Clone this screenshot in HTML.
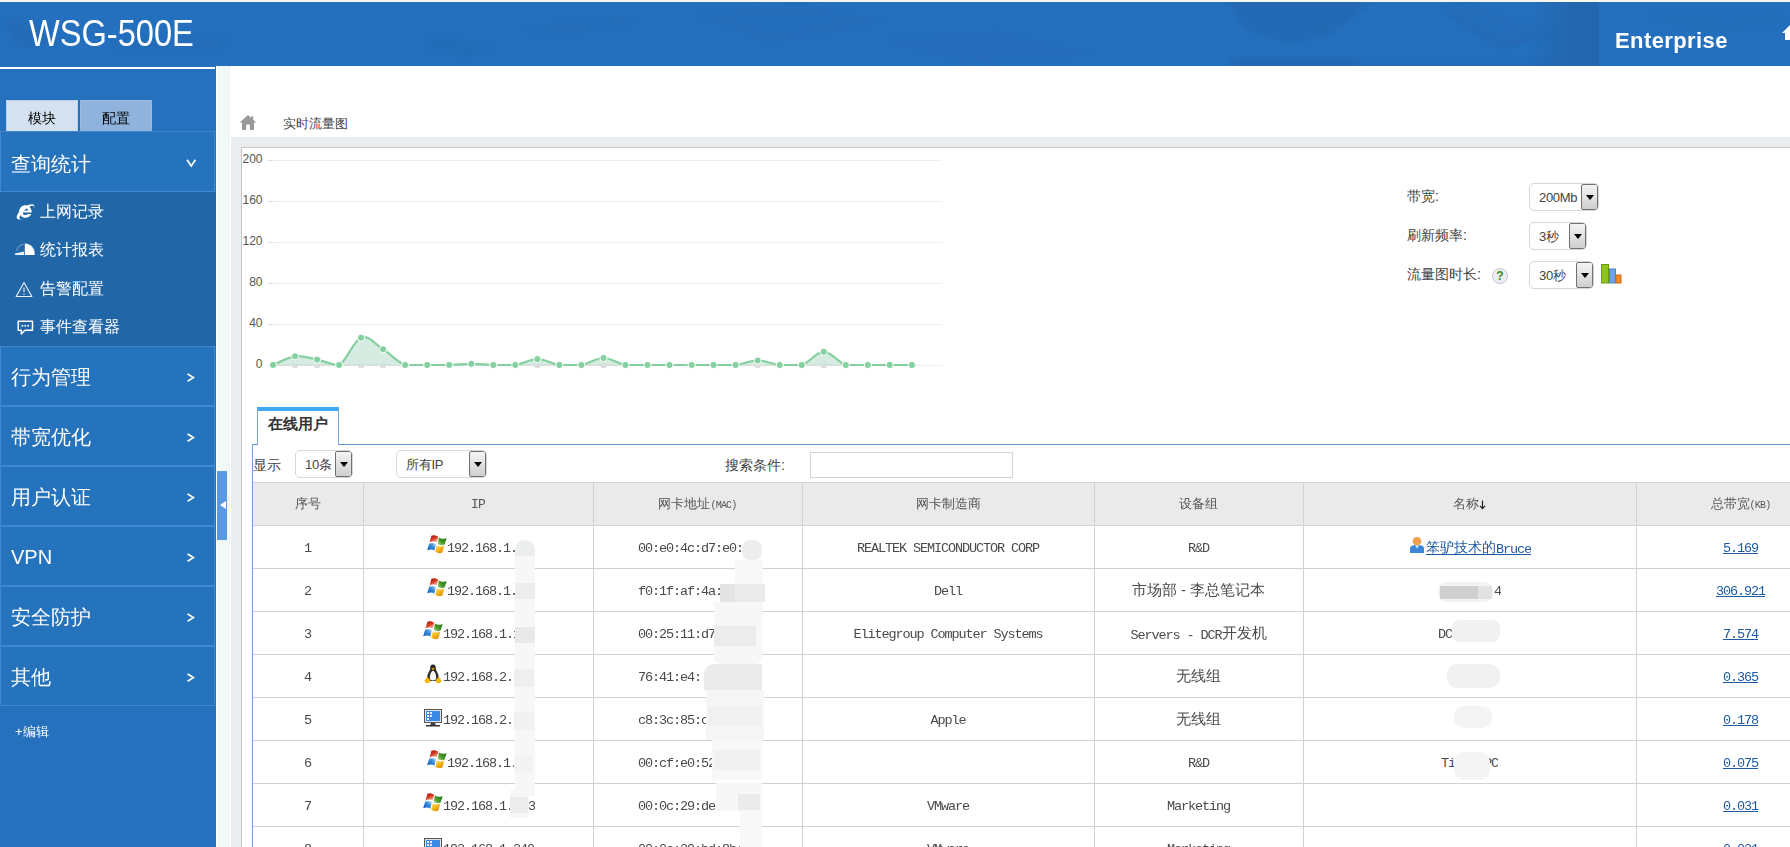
<!DOCTYPE html>
<html lang="zh">
<head>
<meta charset="utf-8">
<title>WSG-500E</title>
<style>
*{box-sizing:border-box;margin:0;padding:0}
html,body{width:1790px;height:847px;overflow:hidden;background:#fff}
body{position:relative;font-family:"Liberation Sans",sans-serif;font-size:13px;color:#444}
.abs{position:absolute}
/* ---------- header ---------- */
#hdr{position:absolute;left:0;top:0;width:1790px;height:66px;background:#2570be;overflow:hidden;border-top:2px solid #fbf8f4}
#hdr svg{position:absolute;left:0;top:-2px}
#logo{position:absolute;left:29px;top:11px;height:42px;line-height:42px;font-size:36.5px;color:#fff;white-space:nowrap;transform:scaleX(.893);transform-origin:0 0}
#ent{position:absolute;left:1599px;top:-2px;width:191px;height:66px}
#ent b{position:absolute;left:16px;top:27px;height:28px;line-height:28px;font-size:22px;letter-spacing:.4px;color:#fff;white-space:nowrap}
/* ---------- sidebar ---------- */
#side{position:absolute;left:0;top:66px;width:216px;height:781px;background:#2571bd}
#side .wl{position:absolute;left:0;top:1px;width:215px;height:2px;background:#fff}
.tab{position:absolute;top:34px;height:31px;line-height:34px;text-align:center;font-size:14px;color:#000;border:1px solid #b9cfe8;border-bottom:none;white-space:nowrap;overflow:hidden}
.mi{position:absolute;left:0;width:215px;height:60px;background:#2673bd;border:1px solid #4087d0;color:#fff;font-size:20px;line-height:61px;padding-left:10px;white-space:nowrap;overflow:hidden}
.mi .cv{position:absolute;left:185px;top:26px;fill:none;stroke:#fff;stroke-width:1.700}
#sub{position:absolute;left:0;top:126px;width:216px;height:154px;background:#2167a7}
.si{position:absolute;left:40px;height:22px;line-height:22px;font-size:16px;color:#fff;white-space:nowrap}
#sub svg{position:absolute}
/* ---------- splitter ---------- */
#split{position:absolute;left:216px;top:66px;width:15px;height:781px;background:#f0f9f6;border-left:1px solid #fffffb;border-right:1px solid #fff}
#split:after{content:"";position:absolute;right:0;top:0;width:1px;height:100%;background:#f0f2f4}
#grip{position:absolute;left:217px;top:471px;width:10px;height:69px;background:#5b99e0}
#grip:after{content:"";position:absolute;left:3px;top:30px;border:4.500px solid transparent;border-right:6px solid #fff;border-left:0}
/* ---------- content ---------- */
.lb{position:absolute;height:22px;line-height:22px;font-size:14px;color:#444;white-space:nowrap}
.sel{position:absolute;height:28px;border:1px solid #d6d6d6;border-radius:5px;background:#fff;overflow:hidden}
.sel span{position:absolute;left:9px;top:0;height:27px;line-height:28px;font-size:13px;color:#444;white-space:nowrap;font-family:"Liberation Sans",sans-serif;letter-spacing:-.3px}
.sel i{position:absolute;right:0;top:0;width:17px;height:26px;border:1px solid #707070;border-radius:2px;background:linear-gradient(#f4f4f4,#cfcfcf)}
.sel i:after{content:"";position:absolute;left:4px;top:10px;border:4px solid transparent;border-top:5px solid #000;border-bottom:0}
#thead{position:absolute;left:253px;top:483px;width:1537px;height:42px;background:#eaeaea}
.th{position:absolute;top:483px;height:42px;line-height:42px;text-align:center;font-size:13px;color:#555;white-space:nowrap;overflow:hidden}
.th b{font-weight:normal;font-family:"Liberation Mono",monospace;font-size:13px;letter-spacing:-.8px}
.th small{font-size:10px;font-family:"Liberation Mono",monospace;letter-spacing:-.8px}
.hl{position:absolute;left:253px;width:1537px;height:1px;background:#d2d2d2}
.vl{position:absolute;top:483px;width:1px;height:364px;background:#d2d2d2}
.td,.tx{position:absolute;height:42px;line-height:43px;font-family:"Liberation Mono",monospace;font-size:13.500px;letter-spacing:-1.100px;color:#4a4a4a;white-space:nowrap;overflow:hidden}
.td{text-align:center}
.cj{font-size:14.500px;letter-spacing:0;font-family:"Liberation Sans",sans-serif;position:relative;top:-1px}
.lk,.lk u{color:#1f5ba3;text-decoration:underline}
.ic{position:absolute}
.bl{position:absolute}
</style>
</head>
<body>
<!-- ================= HEADER ================= -->
<div id="hdr">
<svg width="1790" height="68" viewBox="0 0 1790 68">
 <defs><filter id="bl" x="-5%" y="-30%" width="110%" height="160%"><feGaussianBlur stdDeviation="2.5"/></filter></defs>
 <g fill="#2266af" filter="url(#bl)">
  <path d="M6 18L40 26 62 40 30 48 10 40Z" opacity=".45"/>
  <path d="M110 40L230 36 225 50 120 54Z" opacity=".3"/>
  <path d="M424 36L500 44 470 58 430 52Z" opacity=".35"/>
  <path d="M520 28L620 16 640 24 540 38Z" opacity=".3"/>
  <path d="M690 14L800 4 890 22 770 44Z" opacity=".22"/>
  <path d="M880 40L1000 30 1100 56 960 62Z" opacity=".2"/>
  <path d="M1228 2H1372L1330 36 1290 44 1245 30Z" opacity=".7"/>
  <path d="M1230 57H1360V68H1230Z" opacity=".6"/>
  <path d="M1360 58H1560V68H1360Z" opacity=".3"/>
  <path d="M1440 6L1470 4 1560 36 1500 50 1480 40Z" opacity=".22"/>
 </g>
 <path d="M1440 9L1500 44 1560 34" fill="none" stroke="#2163aa" stroke-width="2" opacity=".35" filter="url(#bl)"/>
 <linearGradient id="hg" x1="0" x2="1" y1="0" y2="0"><stop offset="0" stop-color="#2365ac" stop-opacity="0"/><stop offset=".55" stop-color="#2365ac" stop-opacity=".8"/><stop offset="1" stop-color="#2365ac" stop-opacity=".9"/></linearGradient><rect x="1530" y="2" width="69" height="66" fill="url(#hg)"/>
 <path d="M1640 14L1780 10 1790 24 1700 36Z" fill="#2266af" opacity=".25" filter="url(#bl)"/>
</svg>
<div id="logo">WSG-500E</div>
<div id="ent"><b>Enterprise</b>
 <svg style="left:183px;top:24px" width="10" height="16" viewBox="0 0 10 16"><path d="M0 9 L8 1 L10 1 L10 16 L3 16 L3 9 Z" fill="#fff"/></svg>
</div>
</div>

<!-- ================= SIDEBAR ================= -->
<div id="side">
 <div class="wl"></div>
 <div class="tab" style="left:6px;width:72px;background:#d3e1f0">模块</div>
 <div class="tab" style="left:80px;width:72px;background:#8fb3dc;border-color:#9bbbe0">配置</div>
 <div class="mi" style="top:65px;height:61px;line-height:65px">查询统计<svg class="cv" width="10" height="10" viewBox="0 0 10 10"><path d="M1 1.800L5.200 8 9.400 1.800"/></svg></div>
 <div id="sub">
  <!-- IE -->
  <svg style="left:16px;top:11px" width="19" height="17" viewBox="0 0 19 17"><path d="M9.5 2.2c-3.6 0-6.3 2.6-6.3 6.3 0 3.600 2.7 6.300 6.300 6.300 2.700 0 4.900-1.500 5.800-3.800h-3.500c-.5.700-1.300 1.100-2.300 1.100-1.600 0-2.700-1-2.900-2.600h9.100c.1-3.900-2.500-7.300-6.200-7.300zm-2.800 5.200c.3-1.400 1.300-2.400 2.800-2.400 1.500 0 2.500 1 2.700 2.400z" fill="#fff"/><path d="M1.200 15.800c-1.500-1.500.2-5 3.200-8.200 3.400-3.600 9.800-7.400 12.800-6 1.500.7 1.200 2.600.6 3.800.3-1.300.2-2.300-.8-2.600-2-.6-6.600 2.200-9.800 5.600-2.800 3-4.400 6.200-3.600 7.200.7.900 2.800.1 4.800-1.200-2.600 2.200-5.800 2.800-7.200 1.400z" fill="#fff"/></svg>
  <!-- pie -->
  <svg style="left:15px;top:51px" width="20" height="13" viewBox="0 0 20 13"><path d="M9.800 12V.6A9.600 9.600 0 0 1 19.500 12z" fill="#fff"/><path d="M9 12H0v-1.600l9-1.900z" fill="#fff" opacity=".9"/><path d="M1.500 7.500A9 9 0 0 1 8.600 1.200" fill="none" stroke="#7aa6d6" stroke-width="1"/></svg>
  <!-- warn -->
  <svg style="left:15px;top:89px" width="18" height="17" viewBox="0 0 18 17"><path d="M9 1.500L1.200 15.500H16.800Z" fill="none" stroke="#fff" stroke-width="1.100" stroke-linejoin="round" opacity=".92"/><path d="M9 6.500v4.800M9 12.800v1.200" stroke="#fff" stroke-width="1.100" opacity=".92"/></svg>
  <!-- bubble -->
  <svg style="left:17px;top:128px" width="17" height="17" viewBox="0 0 17 17"><path d="M1.200 1.200H15.500V10.300H8L4.300 14V10.300H1.200Z" fill="none" stroke="#fff" stroke-width="1.500" stroke-linejoin="round"/><path d="M4.500 5.800h1.800M7.400 5.800h1.800M10.300 5.800h1.800" stroke="#fff" stroke-width="1.400"/></svg>
  <div class="si" style="top:9px">上网记录</div>
  <div class="si" style="top:47px">统计报表</div>
  <div class="si" style="top:86px">告警配置</div>
  <div class="si" style="top:124px">事件查看器</div>
 </div>
 <div class="mi" style="top:280px">行为管理<svg class="cv" width="10" height="10" viewBox="0 0 10 10"><path d="M1.600 1L7.400 4.600 1.600 8.200"/></svg></div>
 <div class="mi" style="top:340px">带宽优化<svg class="cv" width="10" height="10" viewBox="0 0 10 10"><path d="M1.600 1L7.400 4.600 1.600 8.200"/></svg></div>
 <div class="mi" style="top:400px">用户认证<svg class="cv" width="10" height="10" viewBox="0 0 10 10"><path d="M1.600 1L7.400 4.600 1.600 8.200"/></svg></div>
 <div class="mi" style="top:460px">VPN<svg class="cv" width="10" height="10" viewBox="0 0 10 10"><path d="M1.600 1L7.400 4.600 1.600 8.200"/></svg></div>
 <div class="mi" style="top:520px">安全防护<svg class="cv" width="10" height="10" viewBox="0 0 10 10"><path d="M1.600 1L7.400 4.600 1.600 8.200"/></svg></div>
 <div class="mi" style="top:580px">其他<svg class="cv" width="10" height="10" viewBox="0 0 10 10"><path d="M1.600 1L7.400 4.600 1.600 8.200"/></svg></div>
 <div class="abs" style="left:15px;top:657px;height:18px;line-height:18px;font-size:13px;color:#fff;white-space:nowrap">+编辑</div>
</div>
<div id="split"></div>
<div id="grip"></div>

<!-- ================= CONTENT ================= -->
<div id="main">
<svg width="0" height="0" style="position:absolute"><defs>
<linearGradient id="gr" x1="0" y1="0" x2=".6" y2="1"><stop offset="0" stop-color="#a01008"/><stop offset=".55" stop-color="#d63a22"/><stop offset="1" stop-color="#f6b9a2"/></linearGradient>
<linearGradient id="gg" x1="1" y1="0" x2="0" y2="1"><stop offset="0" stop-color="#1f6b10"/><stop offset=".6" stop-color="#4a9e2c"/><stop offset="1" stop-color="#cfe6a8"/></linearGradient>
<linearGradient id="gb" x1="0" y1="1" x2="1" y2="0"><stop offset="0" stop-color="#0b4fb0"/><stop offset=".6" stop-color="#3f93dc"/><stop offset="1" stop-color="#c7e6f6"/></linearGradient>
<linearGradient id="gy" x1="0" y1="0" x2=".8" y2="1"><stop offset="0" stop-color="#f9e27a"/><stop offset=".5" stop-color="#f2b81c"/><stop offset="1" stop-color="#e48a06"/></linearGradient>
</defs></svg>
<!-- breadcrumb -->
<svg class="abs" style="left:239px;top:114px" width="18" height="17" viewBox="0 0 18 17"><path d="M9 1L.6 8.600H3V16H7.200V10.500H10.800V16H15V8.600H17.400L14.200 5.700V2.200H12.200V3.900Z" fill="#999"/></svg>
<div class="abs" style="left:283px;top:115px;height:18px;line-height:18px;font-size:13px;color:#444;white-space:nowrap">实时流量图</div>
<div class="abs" style="left:231px;top:137px;width:1559px;height:10px;background:#e9edf0"></div>
<div class="abs" style="left:231px;top:137px;width:10px;height:710px;background:#e9edf0"></div>
<div class="abs" style="left:241px;top:147px;width:1549px;height:700px;background:#fff;border-left:1px solid #c9c9c9;border-top:1px solid #c9c9c9"></div>
<svg class="abs" style="left:241px;top:147px" width="720" height="240" viewBox="0 0 720 240">
<path d="M27 13.5H701" stroke="#eeeeee" stroke-width="1"/>
<path d="M27 13.5H32" stroke="#dddddd" stroke-width="1"/>
<text x="21.5" y="16" text-anchor="end" font-family="Liberation Sans, sans-serif" font-size="12" fill="#555">200</text>
<path d="M27 54.5H701" stroke="#eeeeee" stroke-width="1"/>
<path d="M27 54.5H32" stroke="#dddddd" stroke-width="1"/>
<text x="21.5" y="57" text-anchor="end" font-family="Liberation Sans, sans-serif" font-size="12" fill="#555">160</text>
<path d="M27 95.5H701" stroke="#eeeeee" stroke-width="1"/>
<path d="M27 95.5H32" stroke="#dddddd" stroke-width="1"/>
<text x="21.5" y="98" text-anchor="end" font-family="Liberation Sans, sans-serif" font-size="12" fill="#555">120</text>
<path d="M27 136.5H701" stroke="#eeeeee" stroke-width="1"/>
<path d="M27 136.5H32" stroke="#dddddd" stroke-width="1"/>
<text x="21.5" y="139" text-anchor="end" font-family="Liberation Sans, sans-serif" font-size="12" fill="#555">80</text>
<path d="M27 177.5H701" stroke="#eeeeee" stroke-width="1"/>
<path d="M27 177.5H32" stroke="#dddddd" stroke-width="1"/>
<text x="21.5" y="180" text-anchor="end" font-family="Liberation Sans, sans-serif" font-size="12" fill="#555">40</text>
<path d="M27 218.5H701" stroke="#eeeeee" stroke-width="1"/>
<path d="M27 218.5H32" stroke="#dddddd" stroke-width="1"/>
<text x="21.5" y="221" text-anchor="end" font-family="Liberation Sans, sans-serif" font-size="12" fill="#555">0</text>
<path d="M32.0 218.0 H670.9" stroke="#dcdcdc" stroke-width="2" fill="none"/>
<circle cx="54.0" cy="218.0" r="3.2" fill="#dcdcdc"/>
<circle cx="76.1" cy="218.0" r="3.2" fill="#dcdcdc"/>
<circle cx="120.1" cy="218.0" r="3.2" fill="#dcdcdc"/>
<circle cx="142.1" cy="218.0" r="3.2" fill="#dcdcdc"/>
<circle cx="296.4" cy="218.0" r="3.2" fill="#dcdcdc"/>
<circle cx="362.5" cy="218.0" r="3.2" fill="#dcdcdc"/>
<circle cx="516.7" cy="218.0" r="3.2" fill="#dcdcdc"/>
<circle cx="582.8" cy="218.0" r="3.2" fill="#dcdcdc"/>
<path d="M32.0 218.0 C36.0 216.4 46.1 210.3 54.0 209.3 C62.0 208.3 68.1 211.0 76.1 212.6 C84.0 214.2 90.2 218.0 98.1 218.0 C106.0 214.1 112.2 193.5 120.1 190.7 C128.1 187.9 134.2 197.4 142.1 202.3 C150.1 207.2 156.2 215.2 164.2 218.0 C172.1 218.0 178.3 218.0 186.2 218.0 C194.1 218.0 200.3 218.0 208.2 218.0 C216.2 217.8 222.3 216.8 230.3 216.8 C238.2 216.8 244.4 217.8 252.3 218.0 C260.2 218.0 266.4 218.0 274.3 218.0 C282.3 217.0 288.4 212.2 296.4 212.2 C304.3 212.2 310.5 217.0 318.4 218.0 C326.3 218.0 332.5 218.0 340.4 218.0 C348.4 216.7 354.5 211.0 362.5 211.0 C370.4 211.0 376.5 216.7 384.5 218.0 C392.4 218.0 398.6 218.0 406.5 218.0 C414.4 218.0 420.6 218.0 428.5 218.0 C436.5 218.0 442.6 218.0 450.6 218.0 C458.5 218.0 464.7 218.0 472.6 218.0 C480.5 218.0 486.7 218.0 494.6 218.0 C502.6 217.2 508.7 213.5 516.7 213.5 C524.6 213.5 530.8 217.2 538.7 218.0 C546.6 218.0 552.8 218.0 560.7 218.0 C568.7 215.6 574.8 204.8 582.8 204.8 C590.7 204.8 596.8 215.6 604.8 218.0 C612.7 218.0 618.9 218.0 626.8 218.0 C634.7 218.0 640.9 218.0 648.8 218.0 C656.8 218.0 666.9 218.0 670.9 218.0 L670.9 218.0 L32.0 218.0 Z" fill="#cfe8dc" fill-opacity=".85"/>
<path d="M32.0 218.0 C36.0 216.4 46.1 210.3 54.0 209.3 C62.0 208.3 68.1 211.0 76.1 212.6 C84.0 214.2 90.2 218.0 98.1 218.0 C106.0 214.1 112.2 193.5 120.1 190.7 C128.1 187.9 134.2 197.4 142.1 202.3 C150.1 207.2 156.2 215.2 164.2 218.0 C172.1 218.0 178.3 218.0 186.2 218.0 C194.1 218.0 200.3 218.0 208.2 218.0 C216.2 217.8 222.3 216.8 230.3 216.8 C238.2 216.8 244.4 217.8 252.3 218.0 C260.2 218.0 266.4 218.0 274.3 218.0 C282.3 217.0 288.4 212.2 296.4 212.2 C304.3 212.2 310.5 217.0 318.4 218.0 C326.3 218.0 332.5 218.0 340.4 218.0 C348.4 216.7 354.5 211.0 362.5 211.0 C370.4 211.0 376.5 216.7 384.5 218.0 C392.4 218.0 398.6 218.0 406.5 218.0 C414.4 218.0 420.6 218.0 428.5 218.0 C436.5 218.0 442.6 218.0 450.6 218.0 C458.5 218.0 464.7 218.0 472.6 218.0 C480.5 218.0 486.7 218.0 494.6 218.0 C502.6 217.2 508.7 213.5 516.7 213.5 C524.6 213.5 530.8 217.2 538.7 218.0 C546.6 218.0 552.8 218.0 560.7 218.0 C568.7 215.6 574.8 204.8 582.8 204.8 C590.7 204.8 596.8 215.6 604.8 218.0 C612.7 218.0 618.9 218.0 626.8 218.0 C634.7 218.0 640.9 218.0 648.8 218.0 C656.8 218.0 666.9 218.0 670.9 218.0" fill="none" stroke="#84d0a0" stroke-width="2.2" stroke-linejoin="round"/>
<circle cx="32.0" cy="218.0" r="3.6" fill="#84d0a0" stroke="#fff" stroke-width="1"/>
<circle cx="54.0" cy="209.3" r="3.6" fill="#84d0a0" stroke="#fff" stroke-width="1"/>
<circle cx="76.1" cy="212.6" r="3.6" fill="#84d0a0" stroke="#fff" stroke-width="1"/>
<circle cx="98.1" cy="218.0" r="3.6" fill="#84d0a0" stroke="#fff" stroke-width="1"/>
<circle cx="120.1" cy="190.7" r="3.6" fill="#84d0a0" stroke="#fff" stroke-width="1"/>
<circle cx="142.1" cy="202.3" r="3.6" fill="#84d0a0" stroke="#fff" stroke-width="1"/>
<circle cx="164.2" cy="218.0" r="3.6" fill="#84d0a0" stroke="#fff" stroke-width="1"/>
<circle cx="186.2" cy="218.0" r="3.6" fill="#84d0a0" stroke="#fff" stroke-width="1"/>
<circle cx="208.2" cy="218.0" r="3.6" fill="#84d0a0" stroke="#fff" stroke-width="1"/>
<circle cx="230.3" cy="216.8" r="3.6" fill="#84d0a0" stroke="#fff" stroke-width="1"/>
<circle cx="252.3" cy="218.0" r="3.6" fill="#84d0a0" stroke="#fff" stroke-width="1"/>
<circle cx="274.3" cy="218.0" r="3.6" fill="#84d0a0" stroke="#fff" stroke-width="1"/>
<circle cx="296.4" cy="212.2" r="3.6" fill="#84d0a0" stroke="#fff" stroke-width="1"/>
<circle cx="318.4" cy="218.0" r="3.6" fill="#84d0a0" stroke="#fff" stroke-width="1"/>
<circle cx="340.4" cy="218.0" r="3.6" fill="#84d0a0" stroke="#fff" stroke-width="1"/>
<circle cx="362.5" cy="211.0" r="3.6" fill="#84d0a0" stroke="#fff" stroke-width="1"/>
<circle cx="384.5" cy="218.0" r="3.6" fill="#84d0a0" stroke="#fff" stroke-width="1"/>
<circle cx="406.5" cy="218.0" r="3.6" fill="#84d0a0" stroke="#fff" stroke-width="1"/>
<circle cx="428.5" cy="218.0" r="3.6" fill="#84d0a0" stroke="#fff" stroke-width="1"/>
<circle cx="450.6" cy="218.0" r="3.6" fill="#84d0a0" stroke="#fff" stroke-width="1"/>
<circle cx="472.6" cy="218.0" r="3.6" fill="#84d0a0" stroke="#fff" stroke-width="1"/>
<circle cx="494.6" cy="218.0" r="3.6" fill="#84d0a0" stroke="#fff" stroke-width="1"/>
<circle cx="516.7" cy="213.5" r="3.6" fill="#84d0a0" stroke="#fff" stroke-width="1"/>
<circle cx="538.7" cy="218.0" r="3.6" fill="#84d0a0" stroke="#fff" stroke-width="1"/>
<circle cx="560.7" cy="218.0" r="3.6" fill="#84d0a0" stroke="#fff" stroke-width="1"/>
<circle cx="582.8" cy="204.8" r="3.6" fill="#84d0a0" stroke="#fff" stroke-width="1"/>
<circle cx="604.8" cy="218.0" r="3.6" fill="#84d0a0" stroke="#fff" stroke-width="1"/>
<circle cx="626.8" cy="218.0" r="3.6" fill="#84d0a0" stroke="#fff" stroke-width="1"/>
<circle cx="648.8" cy="218.0" r="3.6" fill="#84d0a0" stroke="#fff" stroke-width="1"/>
<circle cx="670.9" cy="218.0" r="3.6" fill="#84d0a0" stroke="#fff" stroke-width="1"/>
</svg>
<!-- right controls -->
<div class="lb" style="left:1407px;top:185px">带宽:</div>
<div class="lb" style="left:1407px;top:224px">刷新频率:</div>
<div class="lb" style="left:1407px;top:263px">流量图时长:</div>
<div class="abs" style="left:1492px;top:268px;width:16px;height:16px;border-radius:8px;background:#eaeef2;border:1px solid #c6c9cc;color:#3a8f0c;font-size:12px;font-weight:bold;line-height:14px;text-align:center">?</div>
<div class="sel" style="left:1529px;top:183px;width:70px"><span>200Mb</span><i></i></div>
<div class="sel" style="left:1529px;top:222px;width:58px"><span>3秒</span><i></i></div>
<div class="sel" style="left:1529px;top:261px;width:65px"><span>30秒</span><i></i></div>
<svg class="abs" style="left:1601px;top:264px" width="21" height="20" viewBox="0 0 21 20"><rect x=".5" y=".5" width="7" height="18.500" fill="#8fc31f" stroke="#6a9a12"/><rect x="8.500" y="5" width="6" height="14" fill="#6da4e3" stroke="#4d85c8"/><rect x="15" y="11" width="5" height="8" fill="#f08a24" stroke="#c96a10"/></svg>
<!-- tab strip -->
<div class="abs" style="left:252px;top:444px;width:1538px;height:1px;background:#6496cf"></div>
<div class="abs" style="left:252px;top:444px;width:1px;height:403px;background:#6f9fd6"></div>
<div class="abs" style="left:257px;top:407px;width:82px;height:38px;background:#fff;border:1px solid #7aa7da;border-bottom:none;border-top:4px solid #3fa9f5;font-size:15px;font-weight:bold;color:#333;line-height:26px;text-align:center;white-space:nowrap;overflow:hidden">在线用户</div>
<!-- toolbar -->
<div class="lb" style="left:253px;top:454px">显示</div>
<div class="sel" style="left:295px;top:450px;width:58px"><span>10条</span><i></i></div>
<div class="sel" style="left:396px;top:450px;width:91px"><span>所有IP</span><i></i></div>
<div class="lb" style="left:725px;top:454px">搜索条件:</div>
<div class="abs" style="left:810px;top:452px;width:203px;height:26px;border:1px solid #d4d4d4;background:#fff"></div>
<div id="thead"></div>
<div class="th" style="left:252px;width:111px">序号</div>
<div class="th" style="left:363px;width:230px"><b>IP</b></div>
<div class="th" style="left:593px;width:209px">网卡地址<small>(MAC)</small></div>
<div class="th" style="left:802px;width:292px">网卡制造商</div>
<div class="th" style="left:1094px;width:209px">设备组</div>
<div class="th" style="left:1303px;width:333px">名称<svg width="7" height="10" viewBox="0 0 7 10" style="vertical-align:-2px"><path d="M3.500 .5V8M1 5.800L3.500 8.600 6 5.800" fill="none" stroke="#222" stroke-width="1.200"/></svg></div>
<div class="th" style="left:1636px;width:209px">总带宽<small>(KB)</small></div>
<div class="hl" style="top:482px"></div>
<div class="hl" style="top:525px"></div>
<div class="hl" style="top:568px"></div>
<div class="hl" style="top:611px"></div>
<div class="hl" style="top:654px"></div>
<div class="hl" style="top:697px"></div>
<div class="hl" style="top:740px"></div>
<div class="hl" style="top:783px"></div>
<div class="hl" style="top:826px"></div>
<div class="vl" style="left:363px"></div>
<div class="vl" style="left:593px"></div>
<div class="vl" style="left:802px"></div>
<div class="vl" style="left:1094px"></div>
<div class="vl" style="left:1303px"></div>
<div class="vl" style="left:1636px"></div>
<div class="td" style="left:252px;top:527px;width:111px">1</div>
<svg class="ic" width="20" height="19" viewBox="0 0 20 19" style="left:427px;top:535px"><path d="M4.400 .8C6.500 -.3 9 .3 11.300 1.800L9.700 7.600C7.500 6.300 5 6.200 2.500 7.500Z" fill="url(#gr)"/><path d="M12 2.600C14.500 4.200 17 4.200 19.700 3L17.600 9.600C15 10.800 12.800 10.400 10.600 8.900Z" fill="url(#gg)"/><path d="M2.100 8.700C4.500 7.600 6.800 7.700 8.900 8.900L7.400 15.600C5 14.300 2.800 14.200 .2 15.300Z" fill="url(#gb)"/><path d="M9.800 10.400C12 11.800 14.500 11.900 17.200 10.800L15.400 17.400C13 18.600 10.600 18.300 8.300 16.700Z" fill="url(#gy)"/></svg>
<div class="tx" style="left:447px;top:527px">192.168.1.</div>
<div class="tx" style="left:638px;top:527px">00:e0:4c:d7:e0:</div>
<div class="td" style="left:802px;top:527px;width:292px">REALTEK SEMICONDUCTOR CORP</div>
<div class="td" style="left:1094px;top:527px;width:209px">R&amp;D</div>
<svg class="ic" width="16" height="18" viewBox="0 0 16 18" style="left:1409px;top:536px"><circle cx="8" cy="5.200" r="4.300" fill="#f0a24a"/><path d="M1 17V12.500C1 10 3.500 9 8 9s7 1 7 3.500V17Z" fill="#3c86d8"/><path d="M6 9.300L8 12.500 10 9.300Z" fill="#e6f0fb"/></svg>
<div class="tx lk" style="left:1426px;top:527px"><span class="cj" style="font-size:14px">笨驴技术的</span>Bruce</div>
<div class="td lk" style="left:1636px;top:527px;width:209px"><u>5.169</u></div>
<div class="td" style="left:252px;top:570px;width:111px">2</div>
<svg class="ic" width="20" height="19" viewBox="0 0 20 19" style="left:427px;top:578px"><path d="M4.400 .8C6.500 -.3 9 .3 11.300 1.800L9.700 7.600C7.500 6.300 5 6.200 2.500 7.500Z" fill="url(#gr)"/><path d="M12 2.600C14.500 4.200 17 4.200 19.700 3L17.600 9.600C15 10.800 12.800 10.400 10.600 8.900Z" fill="url(#gg)"/><path d="M2.100 8.700C4.500 7.600 6.800 7.700 8.900 8.900L7.400 15.600C5 14.300 2.800 14.200 .2 15.300Z" fill="url(#gb)"/><path d="M9.800 10.400C12 11.800 14.500 11.900 17.200 10.800L15.400 17.400C13 18.600 10.600 18.300 8.300 16.700Z" fill="url(#gy)"/></svg>
<div class="tx" style="left:447px;top:570px">192.168.1.</div>
<div class="tx" style="left:638px;top:570px">f0:1f:af:4a:</div>
<div class="td" style="left:802px;top:570px;width:292px">Dell</div>
<div class="td" style="left:1094px;top:570px;width:209px"><span class="cj">市场部 - 李总笔记本</span></div>
<div class="td lk" style="left:1636px;top:570px;width:209px"><u>306.921</u></div>
<div class="td" style="left:252px;top:613px;width:111px">3</div>
<svg class="ic" width="20" height="19" viewBox="0 0 20 19" style="left:423px;top:621px"><path d="M4.400 .8C6.500 -.3 9 .3 11.300 1.800L9.700 7.600C7.500 6.300 5 6.200 2.500 7.500Z" fill="url(#gr)"/><path d="M12 2.600C14.500 4.200 17 4.200 19.700 3L17.600 9.600C15 10.800 12.800 10.400 10.600 8.900Z" fill="url(#gg)"/><path d="M2.100 8.700C4.500 7.600 6.800 7.700 8.900 8.900L7.400 15.600C5 14.300 2.800 14.200 .2 15.300Z" fill="url(#gb)"/><path d="M9.800 10.400C12 11.800 14.500 11.900 17.200 10.800L15.400 17.400C13 18.600 10.600 18.300 8.300 16.700Z" fill="url(#gy)"/></svg>
<div class="tx" style="left:443px;top:613px">192.168.1.1</div>
<div class="tx" style="left:638px;top:613px">00:25:11:d7</div>
<div class="td" style="left:802px;top:613px;width:292px">Elitegroup Computer Systems</div>
<div class="td" style="left:1094px;top:613px;width:209px">Servers - DCR<span class="cj">开发机</span></div>
<div class="td lk" style="left:1636px;top:613px;width:209px"><u>7.574</u></div>
<div class="td" style="left:252px;top:656px;width:111px">4</div>
<svg class="ic" width="18" height="20" viewBox="0 0 18 20" style="left:424px;top:664px"><path d="M9 .5C6.800 .5 6 2.300 6.200 4.300 6.300 6.300 3.400 9.500 3.200 13.500L5 17H13L14.800 13.500C14.600 9.500 11.700 6.300 11.800 4.300 12 2.300 11.200 .5 9 .5Z" fill="#2b2b2b"/><path d="M9 6.500C7 7.500 5.600 11 5.800 14.500 6 17 12 17 12.200 14.500 12.400 11 11 7.500 9 6.500Z" fill="#f3f3f3"/><path d="M7.300 4.600L9 3.800 10.700 4.600 9 6Z" fill="#f6a800"/><path d="M.3 16.500L3.300 12.800 6.300 16.300 5.500 18.800 2 19.300Z" fill="#f8b400"/><path d="M17.700 16.500L14.700 12.800 11.700 16.300 12.500 18.800 16 19.300Z" fill="#f8b400"/></svg>
<div class="tx" style="left:443px;top:656px">192.168.2.</div>
<div class="tx" style="left:638px;top:656px">76:41:e4:</div>
<div class="td" style="left:1094px;top:656px;width:209px"><span class="cj">无线组</span></div>
<div class="td lk" style="left:1636px;top:656px;width:209px"><u>0.365</u></div>
<div class="td" style="left:252px;top:699px;width:111px">5</div>
<svg class="ic" width="18" height="18" viewBox="0 0 18 18" style="left:424px;top:709px"><rect x=".5" y=".5" width="17" height="13" fill="#e4e4e4" stroke="#555"/><rect x="2" y="2" width="14" height="10" fill="#3a8be6"/><path d="M3 3h2v2H3zM6 3h2v2H6zM3 6h2v2H3zM6 6h2v2H6zM3 9h2v2H3z" fill="#e8f2ff"/><path d="M7 14h4l1 2H6z" fill="#444"/><rect x="2" y="16" width="14" height="1.500" fill="#333"/></svg>
<div class="tx" style="left:443px;top:699px">192.168.2.</div>
<div class="tx" style="left:638px;top:699px">c8:3c:85:c</div>
<div class="td" style="left:802px;top:699px;width:292px">Apple</div>
<div class="td" style="left:1094px;top:699px;width:209px"><span class="cj">无线组</span></div>
<div class="td lk" style="left:1636px;top:699px;width:209px"><u>0.178</u></div>
<div class="td" style="left:252px;top:742px;width:111px">6</div>
<svg class="ic" width="20" height="19" viewBox="0 0 20 19" style="left:427px;top:750px"><path d="M4.400 .8C6.500 -.3 9 .3 11.300 1.800L9.700 7.600C7.500 6.300 5 6.200 2.500 7.500Z" fill="url(#gr)"/><path d="M12 2.600C14.500 4.200 17 4.200 19.700 3L17.600 9.600C15 10.800 12.800 10.400 10.600 8.900Z" fill="url(#gg)"/><path d="M2.100 8.700C4.500 7.600 6.800 7.700 8.900 8.900L7.400 15.600C5 14.300 2.800 14.200 .2 15.300Z" fill="url(#gb)"/><path d="M9.800 10.400C12 11.800 14.500 11.900 17.200 10.800L15.400 17.400C13 18.600 10.600 18.300 8.300 16.700Z" fill="url(#gy)"/></svg>
<div class="tx" style="left:447px;top:742px">192.168.1.</div>
<div class="tx" style="left:638px;top:742px">00:cf:e0:52</div>
<div class="td" style="left:1094px;top:742px;width:209px">R&amp;D</div>
<div class="td lk" style="left:1636px;top:742px;width:209px"><u>0.075</u></div>
<div class="td" style="left:252px;top:785px;width:111px">7</div>
<svg class="ic" width="20" height="19" viewBox="0 0 20 19" style="left:423px;top:793px"><path d="M4.400 .8C6.500 -.3 9 .3 11.300 1.800L9.700 7.600C7.500 6.300 5 6.200 2.500 7.500Z" fill="url(#gr)"/><path d="M12 2.600C14.500 4.200 17 4.200 19.700 3L17.600 9.600C15 10.800 12.800 10.400 10.600 8.900Z" fill="url(#gg)"/><path d="M2.100 8.700C4.500 7.600 6.800 7.700 8.900 8.900L7.400 15.600C5 14.300 2.800 14.200 .2 15.300Z" fill="url(#gb)"/><path d="M9.800 10.400C12 11.800 14.500 11.900 17.200 10.800L15.400 17.400C13 18.600 10.600 18.300 8.300 16.700Z" fill="url(#gy)"/></svg>
<div class="tx" style="left:443px;top:785px">192.168.1.</div>
<div class="tx" style="left:638px;top:785px">00:0c:29:de:</div>
<div class="td" style="left:802px;top:785px;width:292px">VMware</div>
<div class="td" style="left:1094px;top:785px;width:209px">Marketing</div>
<div class="td lk" style="left:1636px;top:785px;width:209px"><u>0.031</u></div>
<div class="td" style="left:252px;top:828px;width:111px">8</div>
<svg class="ic" width="18" height="18" viewBox="0 0 18 18" style="left:424px;top:838px"><rect x=".5" y=".5" width="17" height="13" fill="#e4e4e4" stroke="#555"/><rect x="2" y="2" width="14" height="10" fill="#3a8be6"/><path d="M3 3h2v2H3zM6 3h2v2H6zM3 6h2v2H3zM6 6h2v2H6zM3 9h2v2H3z" fill="#e8f2ff"/><path d="M7 14h4l1 2H6z" fill="#444"/><rect x="2" y="16" width="14" height="1.500" fill="#333"/></svg>
<div class="tx" style="left:443px;top:828px">192.168.1.240</div>
<div class="tx" style="left:638px;top:828px">00:0c:29:bd:8b:</div>
<div class="td" style="left:802px;top:828px;width:292px">VMware</div>
<div class="td" style="left:1094px;top:828px;width:209px">Marketing</div>
<div class="td lk" style="left:1636px;top:828px;width:209px"><u>0.031</u></div>
<div class="tx" style="left:1494px;top:570px">4</div>
<div class="tx" style="left:1438px;top:613px">DC</div>
<div class="tx" style="left:1441px;top:742px">Ti</div>
<div class="tx" style="left:1484px;top:742px">PC</div>
<div class="tx" style="left:528px;top:785px">3</div>
<div class="bl" style="left:515px;top:540px;width:20px;height:256px;background:#f7f7f7;border-radius:10px 10px 0 0"></div>
<div class="bl" style="left:515px;top:540px;width:20px;height:16px;background:#eceded;border-radius:10px 10px 0 0"></div>
<div class="bl" style="left:515px;top:583px;width:20px;height:16px;background:#ededed;border-radius:0"></div>
<div class="bl" style="left:515px;top:627px;width:20px;height:16px;background:#e9e9ea;border-radius:0"></div>
<div class="bl" style="left:514px;top:669px;width:20px;height:18px;background:#efefef;border-radius:0"></div>
<div class="bl" style="left:514px;top:712px;width:20px;height:18px;background:#f1f1f1;border-radius:0"></div>
<div class="bl" style="left:514px;top:755px;width:18px;height:18px;background:#f3f3f3;border-radius:0"></div>
<div class="bl" style="left:510px;top:790px;width:19px;height:28px;background:#f7f7f7;border-radius:0"></div>
<div class="bl" style="left:510px;top:797px;width:18px;height:16px;background:#ececec;border-radius:0"></div>
<div class="bl" style="left:742px;top:540px;width:20px;height:20px;background:#ededee;border-radius:8px"></div>
<div class="bl" style="left:735px;top:560px;width:28px;height:24px;background:#f8f8f8;border-radius:0"></div>
<div class="bl" style="left:720px;top:584px;width:45px;height:18px;background:#e4e4e4;border-radius:0"></div>
<div class="bl" style="left:735px;top:584px;width:30px;height:18px;background:#ebebeb;border-radius:0"></div>
<div class="bl" style="left:714px;top:602px;width:48px;height:60px;background:#f7f7f7;border-radius:0"></div>
<div class="bl" style="left:714px;top:626px;width:42px;height:20px;background:#ececec;border-radius:0"></div>
<div class="bl" style="left:718px;top:646px;width:40px;height:20px;background:#f7f7f7;border-radius:0"></div>
<div class="bl" style="left:704px;top:664px;width:58px;height:26px;background:#ebebeb;border-radius:10px 0 0 0"></div>
<div class="bl" style="left:706px;top:690px;width:58px;height:50px;background:#f6f6f6;border-radius:0"></div>
<div class="bl" style="left:708px;top:706px;width:54px;height:20px;background:#f0f0f0;border-radius:0"></div>
<div class="bl" style="left:712px;top:740px;width:50px;height:40px;background:#f8f8f8;border-radius:0"></div>
<div class="bl" style="left:714px;top:750px;width:46px;height:20px;background:#f1f1f1;border-radius:0"></div>
<div class="bl" style="left:716px;top:783px;width:46px;height:28px;background:#f7f7f7;border-radius:0"></div>
<div class="bl" style="left:738px;top:794px;width:22px;height:16px;background:#ebebeb;border-radius:0"></div>
<div class="bl" style="left:740px;top:811px;width:22px;height:36px;background:#f8f8f8;border-radius:0"></div>
<div class="bl" style="left:1438px;top:582px;width:55px;height:20px;background:#f3f3f3;border-radius:8px"></div>
<div class="bl" style="left:1440px;top:586px;width:38px;height:13px;background:#cfcfcf;border-radius:0"></div>
<div class="bl" style="left:1478px;top:586px;width:14px;height:13px;background:#e2e2e2;border-radius:0"></div>
<div class="bl" style="left:1452px;top:620px;width:48px;height:22px;background:#f1f1f1;border-radius:8px"></div>
<div class="bl" style="left:1447px;top:664px;width:53px;height:24px;background:#f1f1f1;border-radius:10px"></div>
<div class="bl" style="left:1454px;top:706px;width:38px;height:22px;background:#f4f4f4;border-radius:10px"></div>
<div class="bl" style="left:1454px;top:752px;width:36px;height:28px;background:#f4f4f4;border-radius:10px"></div>

</div>
</body>
</html>
